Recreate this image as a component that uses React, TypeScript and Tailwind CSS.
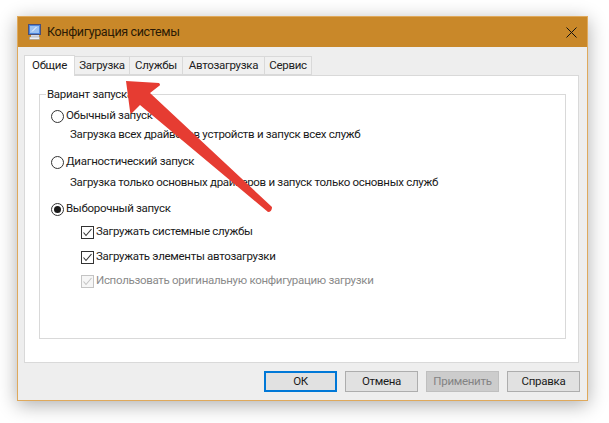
import React from "react";

function Radio({ checked = false }: { checked?: boolean }) {
  return (
    <span className="w-[13px] h-[13px] rounded-full border border-[#333333] bg-white flex items-center justify-center shrink-0">
      {checked && <span className="w-[7px] h-[7px] rounded-full bg-[#1a1a1a]" />}
    </span>
  );
}

function Check({ disabled = false }: { disabled?: boolean }) {
  const c = disabled ? "#c4c4c4" : "#333333";
  return (
    <svg width="13" height="13" viewBox="0 0 13 13" className="shrink-0">
      <rect x="0.5" y="0.5" width="12" height="12" fill={disabled ? "#f6f6f6" : "#fff"} stroke={disabled ? "#c4c4c4" : "#333"} />
      <path d="M2.5 6.5 L5 9.5 L10.5 3" fill="none" stroke={c} strokeWidth="1.1" />
    </svg>
  );
}

function Btn({ label, cls }: { label: string; cls: string }) {
  return (
    <div className={`w-[73px] h-[21px] flex items-center justify-center text-[11.5px] tracking-[-0.3px] leading-none ${cls}`}>{label}</div>
  );
}

function Tab({ label, w }: { label: string; w: string }) {
  return (
    <div className={`${w} h-[19px] bg-[#f0f0f0] border border-l-0 border-[#d9d9d9] flex items-center justify-center text-[#222]`}>
      {label}
    </div>
  );
}

function Line({ children, cls }: { children: React.ReactNode; cls: string }) {
  return <div className={`flex items-center gap-[2px] h-[16px] ${cls}`}>{children}</div>;
}

export default function App() {
  return (
    <div className="relative w-[609px] h-[423px] bg-white overflow-hidden pt-4 pl-[17px] font-['Roboto','Noto_Sans',sans-serif] text-[#1a1a1a] text-[11.5px] tracking-[-0.3px]">
      <div className="w-[571px] h-[385px] bg-[#eeeeee] border border-[#dfa95c] shadow-[0_4px_18px_rgba(0,0,0,0.32)] flex flex-col">
        <div className="h-[30px] bg-[#c98829] flex items-center pl-[9px] pr-[10px] shrink-0">
          <svg width="15" height="16" viewBox="0 0 15 16" className="shrink-0">
            <rect x="1.5" y="0.5" width="12" height="10" fill="#4d86dc" stroke="#4a4f78" />
            <rect x="3" y="2" width="9" height="7" fill="#9cc2f2" />
            <path d="M5 7.5 L9.5 3" stroke="#f4f8ff" />
            <rect x="4" y="11" width="8" height="2" fill="#d8dbe2" />
            <rect x="2.5" y="13" width="10" height="2.5" fill="#eef0f4" stroke="#8a8f9c" strokeWidth="0.5" />
          </svg>
          <span className="ml-[5px] text-[12.5px] tracking-[-0.35px] text-[#2a1a05] leading-none">Конфигурация системы</span>
          <svg width="11" height="11" viewBox="0 0 11 11" className="ml-auto">
            <path d="M0.5 0.5 L10.5 10.5 M10.5 0.5 L0.5 10.5" stroke="#111" strokeWidth="1" />
          </svg>
        </div>

        <div className="flex-1 flex flex-col px-[6px] pt-[7px]">
          <div className="flex items-end h-[21px] relative z-10">
            <div className="w-[51px] h-[21px] bg-white border border-b-0 border-[#d9d9d9] flex items-center justify-center -mb-px">Общие</div>
            <Tab label="Загрузка" w="w-[55px]" />
            <Tab label="Службы" w="w-[53px]" />
            <Tab label="Автозагрузка" w="w-[82px]" />
            <Tab label="Сервис" w="w-[47px]" />
          </div>
          <div className="w-[555px] h-[288px] bg-white border border-[#d9d9d9] px-[14px] pt-[21px]">
            <fieldset className="w-[527px] h-[252px] border border-[#d9d9d9] -mt-[10px] pl-[11px]">
              <legend className="-ml-[5px] leading-[14px] px-px">Вариант запуска</legend>
              <Line cls="mt-[7px]"><Radio />Обычный запуск</Line>
              <div className="ml-[19px] mt-[2px] leading-[16px]">Загрузка всех драйверов устройств и запуск всех служб</div>
              <Line cls="mt-[12px]"><Radio />Диагностический запуск</Line>
              <div className="ml-[19px] mt-[4px] leading-[16px]">Загрузка только основных драйверов и запуск только основных служб</div>
              <Line cls="mt-[11px]"><Radio checked />Выборочный запуск</Line>
              <Line cls="ml-[30px] mt-[7px]"><Check />Загружать системные службы</Line>
              <Line cls="ml-[30px] mt-[9px]"><Check />Загружать элементы автозагрузки</Line>
              <Line cls="ml-[30px] mt-[8px] text-[#8a8a8a]"><Check disabled />Использовать оригинальную конфигурацию загрузки</Line>
            </fieldset>
          </div>
          <div className="flex justify-end gap-[8px] mt-[8px] w-[556px]">
            <Btn label="ОК" cls="bg-[#e1e1e1] border-2 border-[#0078d7]" />
            <Btn label="Отмена" cls="bg-[#e1e1e1] border border-[#adadad]" />
            <Btn label="Применить" cls="bg-[#cccccc] border border-[#bfbfbf] text-[#838383]" />
            <Btn label="Справка" cls="bg-[#e1e1e1] border border-[#adadad]" />
          </div>
        </div>
      </div>

      <svg width="609" height="423" viewBox="0 0 609 423" className="absolute left-0 top-0 pointer-events-none">
        <path d="M126 81 L159 83 Q161 85 159 86 L150 93 L272 207 Q272 212 268 212 L140 105 L132 113 Q130 114 130 111 Z" fill="#e63c32" />
      </svg>
    </div>
  );
}
